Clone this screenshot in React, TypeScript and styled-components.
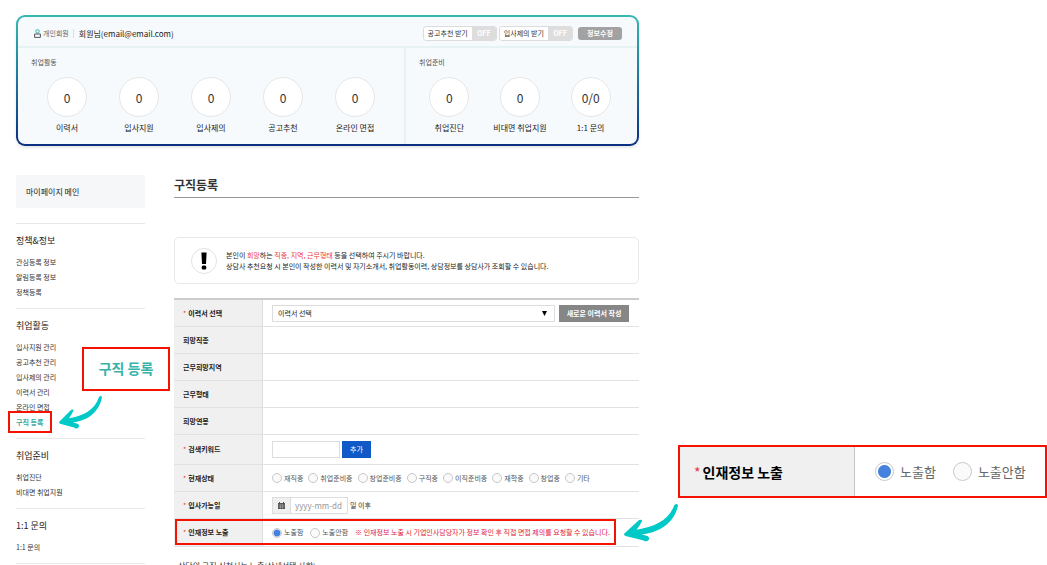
import React from "react";
import styled, { createGlobalStyle, css } from "styled-components";

const GlobalStyle = createGlobalStyle`
  *, *::before, *::after { box-sizing: border-box; }
  body {
    margin: 0;
    background: #fff;
    color: #444;
    font-family: "Noto Sans CJK KR", "Noto Sans", sans-serif;
    font-size: 7px;
    line-height: 11px;
  }
  h1, h2, h3, p, ul { margin: 0; padding: 0; font-weight: 400; }
  ul { list-style: none; }
  a { color: inherit; text-decoration: none; }
  button, input, select { font: inherit; color: inherit; margin: 0; }
`;

const Page = styled.div`
  position: relative;
  height: 100vh;
  overflow: hidden;
  display: grid;
  grid-template-columns: minmax(0, 1fr) 392px;
  gap: 16px;
  padding: 15px 0 0 16px;
`;

const Content = styled.div`
  min-width: 0;
`;

/* ---------- summary card ---------- */

const Summary = styled.section`
  border: 2px solid transparent;
  border-radius: 9px;
  background:
    linear-gradient(#f7fafd, #f7fafd) padding-box,
    linear-gradient(#35b9b2, #0b2f83) border-box;
  box-shadow: 0 2px 3px rgba(0, 0, 0, 0.1);
`;

const SummaryHead = styled.header`
  display: flex;
  align-items: center;
  height: 31px;
  padding: 3px 15px 0 16px;
  border-bottom: 2px solid #e6f2f3;
`;

const MemberType = styled.span`
  display: flex;
  align-items: center;
  gap: 2px;
  color: #666;
  padding-right: 4px;
  border-right: 1px solid #ddd;
  line-height: 8px;
`;

const MemberName = styled.strong`
  flex: 1;
  padding-left: 5px;
  font-size: 8px;
  font-weight: 400;
  color: #222;
`;

const ToggleButton = styled.button`
  display: flex;
  align-items: stretch;
  height: 15px;
  margin-right: 2px;
  padding: 0;
  border: 1px solid #ddd;
  border-radius: 3px;
  background: #fff;
  color: #333;
  line-height: 13px;
  overflow: hidden;

  span { padding: 0 4px; }
  b {
    width: 24px;
    background: #ddd;
    color: #fff;
    font-weight: 700;
  }
`;

const EditButton = styled.button`
  width: 44px;
  height: 13px;
  margin-left: 3px;
  padding: 0;
  border: 0;
  border-radius: 3px;
  background: #a2a2a2;
  color: #fff;
  font-weight: 700;
  line-height: 13px;
`;

const SummaryBody = styled.div`
  display: grid;
  grid-template-columns: 386fr 233fr;
`;

const StatGroup = styled.div<{ $divided?: boolean }>`
  height: 96px;
  padding: 9px 11px 0 13px;
  ${(p) => p.$divided && css`border-left: 2px solid #e6f2f3;`}
  h2 { font-size: 7px; color: #555; line-height: 11px; }
`;

const StatList = styled.ul<{ $wide?: boolean }>`
  display: flex;
  margin: ${(p) => (p.$wide ? "9px 2px 0 0" : "9px 0 0 -5px")};
`;

const Stat = styled.li`
  flex: 1;
  display: flex;
  flex-direction: column;
  align-items: center;
  gap: 5px;
  font-size: 8px;
  line-height: 12px;
  color: #222;
  white-space: nowrap;
`;

const StatValue = styled.a`
  width: 40px;
  height: 40px;
  border: 1px solid #e6e6e6;
  border-radius: 50%;
  background: #fff;
  color: #333;
  font-size: 12px;
  line-height: 40px;
  text-align: center;
`;

/* ---------- columns ---------- */

const Columns = styled.div`
  display: grid;
  grid-template-columns: 129px minmax(0, 1fr);
  gap: 29px;
  margin-top: 29px;
`;

const SideMain = styled.a`
  display: block;
  height: 33px;
  margin-bottom: 15px;
  padding-left: 10px;
  border-radius: 2px;
  background: #f5f7f9;
  color: #222;
  font-size: 8px;
  line-height: 33px;
`;

const SideNav = styled.nav`
  > section:last-child { border-bottom: 1px solid #e8e8e8; }
`;

const SideGroup = styled.section`
  border-top: 1px solid #e8e8e8;
  padding-bottom: 8px;
  h2 {
    padding: 11px 0 8px;
    font-size: 9px;
    line-height: 12px;
    color: #222;
  }
  li { position: relative; height: 15px; line-height: 15px; color: #333; }
`;

const SideLink = styled.a<{ $active?: boolean }>`
  ${(p) => p.$active && css`color: #35aaa0; font-weight: 700;`}
`;

const Main = styled.main`
  min-width: 0;
`;

const Title = styled.h1`
  height: 23px;
  border-bottom: 1px solid #999;
  font-size: 12px;
  font-weight: 700;
  line-height: 19px;
  color: #333;
`;

const Notice = styled.div`
  display: flex;
  align-items: center;
  gap: 9px;
  height: 47px;
  margin: 39px 0 14px;
  padding-left: 16px;
  border: 1px solid #e8e8e8;
  border-radius: 5px;
  color: #222;
  em { font-style: normal; color: #f0383a; }
`;

/* ---------- form ---------- */

const FormTable = styled.table`
  width: 100%;
  table-layout: fixed;
  border-collapse: separate;
  border-spacing: 0;
  border-top: 2px solid #ccc;
`;

const Row = styled.tr<{ $height?: number }>`
  position: relative;
  height: ${(p) => p.$height ?? 27}px;

  > th, > td {
    padding: 0;
    border-bottom: 1px solid #e2e2e2;
    vertical-align: middle;
  }
  > th {
    width: 89px;
    padding-left: 9px;
    border-right: 1px solid #ddd;
    background: #f0f0f0;
    color: #222;
    font-weight: 700;
    text-align: left;
  }
  > td { padding: 0 10px 0 9px; }
`;

const Star = styled.span`
  margin-right: 2px;
  color: #e8344a;
  font-weight: 400;
`;

const Line = styled.div<{ $gap: number }>`
  display: flex;
  align-items: center;
  gap: ${(p) => p.$gap}px;
  color: #333;
  white-space: nowrap;
`;

const SelectWrap = styled.div`
  position: relative;
  flex: 1;
  svg { position: absolute; right: 8px; top: 6px; pointer-events: none; }
`;

const Select = styled.select`
  display: block;
  width: 100%;
  height: 17px;
  padding: 0 5px;
  appearance: none;
  border: 1px solid #ddd;
  border-radius: 0;
  background: #fff;
  color: #222;
`;

const SolidButton = styled.button<{ $primary?: boolean }>`
  width: ${(p) => (p.$primary ? 29 : 70)}px;
  height: 17px;
  padding: 0;
  border: 0;
  background: ${(p) => (p.$primary ? "#1259c8" : "#868686")};
  color: #fff;
  font-weight: ${(p) => (p.$primary ? 400 : 700)};
  line-height: 17px;
`;

const KeywordInput = styled.input`
  width: 68px;
  height: 17px;
  padding: 0 4px;
  border: 1px solid #ddd;
`;

const DateBox = styled.div`
  display: flex;
  width: 76px;
  height: 17px;
  border: 1px solid #ddd;
  span {
    display: grid;
    place-items: center;
    width: 18px;
    border-right: 1px solid #ddd;
    background: #f0f0f0;
  }
  input {
    flex: 1;
    min-width: 0;
    padding: 0 0 0 4px;
    border: 0;
    font-size: 8px;
  }
  input::placeholder { color: #999; }
`;

const RadioLabel = styled.label<{ $large?: boolean }>`
  display: flex;
  align-items: center;
  gap: ${(p) => (p.$large ? 6 : 2)}px;
  color: ${(p) => (p.$large ? "#666" : "#555")};
  font-size: ${(p) => (p.$large ? 13 : 7)}px;
  line-height: ${(p) => (p.$large ? 20 : 11)}px;

  input {
    appearance: none;
    width: ${(p) => (p.$large ? 19 : 10)}px;
    height: ${(p) => (p.$large ? 19 : 10)}px;
    border: 1px solid #c8c8c8;
    border-radius: 50%;
    background: #fafafa;
  }
  input:checked {
    background: radial-gradient(circle, #4482de 0 ${(p) => (p.$large ? "6px, #fff 7px" : "3px, #fff 4px")});
  }
`;

const Warning = styled.span`
  color: #e0203c;
`;

const Footnote = styled.p`
  padding: 13px 0 0 4px;
  font-size: 8px;
  line-height: 12px;
  color: #333;
`;

/* ---------- annotations over the page ---------- */

const RedBox = styled.span`
  position: absolute;
  border: 2px solid #f61200;
  pointer-events: none;
`;

const MenuMark = styled(RedBox)`
  left: -8px;
  top: -4px;
  width: 44px;
  height: 22px;
`;

const MenuCallout = styled(RedBox)`
  left: 66px;
  top: -68px;
  width: 88px;
  height: 44px;
  z-index: 1;
  background: #fff;
  color: #35b3aa;
  font-size: 14px;
  font-weight: 700;
  line-height: 39px;
  text-align: center;
  white-space: nowrap;
`;

const RowMark = styled(RedBox)`
  left: 1px;
  right: 23px;
  top: 0;
  height: 26px;
`;

const MenuArrow = styled.svg`
  position: absolute;
  left: 43px;
  top: -19px;
  overflow: visible;
`;

const RowArrow = styled.svg`
  position: absolute;
  right: -39px;
  top: -15px;
  overflow: visible;
`;

const Aside = styled.aside`
  position: relative;
`;

const ExposureCallout = styled.div`
  position: absolute;
  right: 0;
  top: 430px;
  display: grid;
  grid-template-columns: 175px 1fr;
  width: 369px;
  height: 53px;
  border: 2px solid #f61200;
  background: #fff;
`;

const CalloutName = styled.div`
  display: flex;
  align-items: center;
  padding: 2px 0 0 14px;
  border-right: 1px solid #c4c4c4;
  background: #f0f0f0;
  color: #000;
  font-size: 14px;
  font-weight: 700;
`;

const CalloutOptions = styled.div`
  display: flex;
  align-items: center;
  gap: 17px;
  padding-left: 20px;
`;

const Arrow = () => (
  <path
    d="M.5 25.5L12 14Q14 13 14.5 14.5Q13 18 10 22.3C24 20 36 14 40 1Q42 -1 43 1C41 14 30 25 14 26.3L19 28Q21 30 19 32Q17 33 15 31.5L2 28Q-1 27 .5 25.5Z"
    fill="#00c9c8"
  />
);

const activity = ["이력서", "입사지원", "입사제의", "공고추천", "온라인 면접"];
const preparation: [string, string][] = [["취업진단", "0"], ["비대면 취업지원", "0"], ["1:1 문의", "0/0"]];
const menu = [
  { title: "정책&정보", items: ["관심등록 정보", "알림등록 정보", "정책등록"] },
  { title: "취업활동", items: ["입사지원 관리", "공고추천 관리", "입사제의 관리", "이력서 관리", "온라인 면접", "구직 등록"] },
  { title: "취업준비", items: ["취업진단", "비대면 취업지원"] },
  { title: "1:1 문의", items: ["1:1 문의"] },
];
const statuses = ["재직중", "취업준비중", "창업준비중", "구직중", "이직준비중", "재학중", "창업중", "기타"];

export default function App() {
  return (
    <Page>
      <GlobalStyle />
      <Content>
        <Summary>
          <SummaryHead>
            <MemberType>
              <svg width="7" height="9" viewBox="0 0 7 9" fill="none">
                <circle cx="3.5" cy="2.3" r="1.7" stroke="#35b3aa" />
                <path d="M.6 8.4V5H6.4V8.4Z" stroke="#555" />
              </svg>
              개인회원
            </MemberType>
            <MemberName>회원님(email@email.com)</MemberName>
            <ToggleButton type="button"><span>공고추천 받기</span><b>OFF</b></ToggleButton>
            <ToggleButton type="button"><span>입사제의 받기</span><b>OFF</b></ToggleButton>
            <EditButton type="button">정보수정</EditButton>
          </SummaryHead>
          <SummaryBody>
            <StatGroup>
              <h2>취업활동</h2>
              <StatList $wide>
                {activity.map((name) => (
                  <Stat key={name}><StatValue href="#">0</StatValue>{name}</Stat>
                ))}
              </StatList>
            </StatGroup>
            <StatGroup $divided>
              <h2>취업준비</h2>
              <StatList>
                {preparation.map(([name, value]) => (
                  <Stat key={name}><StatValue href="#">{value}</StatValue>{name}</Stat>
                ))}
              </StatList>
            </StatGroup>
          </SummaryBody>
        </Summary>

        <Columns>
          <SideNav>
            <SideMain href="#">마이페이지 메인</SideMain>
            {menu.map((group) => (
              <SideGroup key={group.title}>
                <h2>{group.title}</h2>
                <ul>
                  {group.items.map((item) => {
                    const active = item === "구직 등록";
                    return (
                      <li key={item}>
                        <SideLink href="#" $active={active}>{item}</SideLink>
                        {active && (
                          <>
                            <MenuMark />
                            <MenuCallout>구직 등록</MenuCallout>
                            <MenuArrow width="43" height="33" viewBox="0 0 43 33"><Arrow /></MenuArrow>
                          </>
                        )}
                      </li>
                    );
                  })}
                </ul>
              </SideGroup>
            ))}
          </SideNav>

          <Main>
            <Title>구직등록</Title>
            <Notice>
              <svg width="26" height="26" viewBox="0 0 26 26">
                <circle cx="13" cy="13" r="12.5" fill="#fff" stroke="#e2e2e2" />
                <path d="M10.4 4.5H15.6L15 16H11Z" />
                <rect x="10.7" y="17.5" width="4.6" height="4" rx="1.5" />
              </svg>
              <div>
                <p>본인이 <em>희망</em>하는 <em>직종, 지역, 근무형태</em> 등을 선택하여 주시기 바랍니다.</p>
                <p>상담사 추천요청 시 본인이 작성한 이력서 및 자기소개서, 취업활동이력, 상담정보를 상담사가 조회할 수 있습니다.</p>
              </div>
            </Notice>

            <FormTable>
              <tbody>
                <Row>
                  <th scope="row"><Star>*</Star><label htmlFor="resume">이력서 선택</label></th>
                  <td>
                    <Line $gap={4}>
                      <SelectWrap>
                        <Select id="resume"><option>이력서 선택</option></Select>
                        <svg width="5" height="5" viewBox="0 0 5 5"><path d="M0 0H5L2.5 5Z" /></svg>
                      </SelectWrap>
                      <SolidButton type="button">새로운 이력서 작성</SolidButton>
                    </Line>
                  </td>
                </Row>
                {["희망직종", "근무희망지역", "근무형태", "희망연봉"].map((name) => (
                  <Row key={name}><th scope="row">{name}</th><td /></Row>
                ))}
                <Row $height={30}>
                  <th scope="row"><Star>*</Star><label htmlFor="keyword">검색키워드</label></th>
                  <td>
                    <Line $gap={2}>
                      <KeywordInput id="keyword" type="text" />
                      <SolidButton type="button" $primary>추가</SolidButton>
                    </Line>
                  </td>
                </Row>
                <Row>
                  <th scope="row"><Star>*</Star>현재상태</th>
                  <td>
                    <Line $gap={5}>
                      {statuses.map((name) => (
                        <RadioLabel key={name}><input type="radio" name="status" />{name}</RadioLabel>
                      ))}
                    </Line>
                  </td>
                </Row>
                <Row>
                  <th scope="row"><Star>*</Star><label htmlFor="date">입사가능일</label></th>
                  <td>
                    <Line $gap={2}>
                      <DateBox>
                        <span>
                          <svg width="7" height="7" viewBox="0 0 7 7">
                            <path d="M0 1H1V0H2V1H5V0H6V1H7V7H0Z" fill="#555" />
                            <path d="M.5 3H6.5M.5 5H6.5M2.5 2.5V6.5M4.5 2.5V6.5" stroke="#bbb" strokeWidth=".5" />
                          </svg>
                        </span>
                        <input id="date" type="text" placeholder="yyyy-mm-dd" />
                      </DateBox>
                      일 이후
                    </Line>
                  </td>
                </Row>
                <Row $height={28}>
                  <th scope="row"><Star>*</Star>인재정보 노출</th>
                  <td>
                    <Line $gap={7}>
                      <RadioLabel><input type="radio" name="exposure" defaultChecked />노출함</RadioLabel>
                      <RadioLabel><input type="radio" name="exposure" />노출안함</RadioLabel>
                      <Warning>※ 인재정보 노출 시 기업인사담당자가 정보 확인 후 직접 면접 제의를 요청할 수 있습니다.</Warning>
                    </Line>
                    <RowMark />
                    <RowArrow width="54" height="38" viewBox="0 0 43 33" preserveAspectRatio="none"><Arrow /></RowArrow>
                  </td>
                </Row>
              </tbody>
            </FormTable>
            <Footnote>상담의 구직 신청서는 노출(상세선택 사항)</Footnote>
          </Main>
        </Columns>
      </Content>

      <Aside>
        <ExposureCallout>
          <CalloutName><Star>*</Star>인재정보 노출</CalloutName>
          <CalloutOptions>
            <RadioLabel $large><input type="radio" name="exposureZoom" defaultChecked />노출함</RadioLabel>
            <RadioLabel $large><input type="radio" name="exposureZoom" />노출안함</RadioLabel>
          </CalloutOptions>
        </ExposureCallout>
      </Aside>
    </Page>
  );
}
